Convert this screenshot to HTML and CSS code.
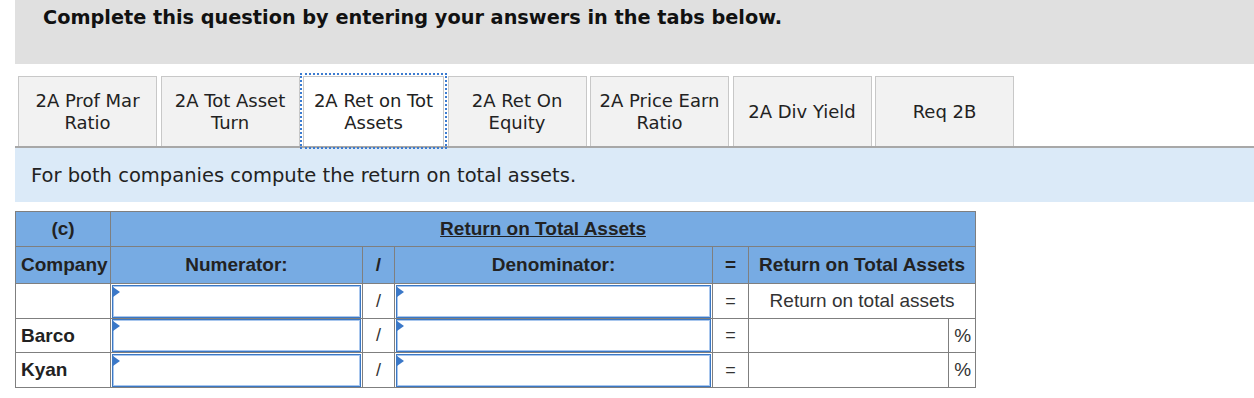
FILE: index.html
```html
<!DOCTYPE html>
<html lang="en">
<head>
  <meta charset="UTF-8" />
  <meta name="viewport" content="width=device-width, initial-scale=1.0"/>
  <title>Return on Total Assets</title>
  <link rel="stylesheet" href="styles.css">
</head>
<body>
  <div class="page">
    <div class="prompt">
      <h1>Complete this question by entering your answers in the tabs below.</h1>
    </div>

    <div class="tabs">
      <button class="tab">2A Prof Mar Ratio</button>
      <button class="tab">2A Tot Asset Turn</button>
      <button class="tab active">2A Ret on Tot Assets</button>
      <button class="tab">2A Ret On Equity</button>
      <button class="tab">2A Price Earn Ratio</button>
      <button class="tab">2A Div Yield</button>
      <button class="tab">Req 2B</button>
    </div>

    <div class="instructions">For both companies compute the return on total assets.</div>

    <table class="calc">
      <colgroup>
        <col class="c-company">
        <col class="c-num">
        <col class="c-op">
        <col class="c-den">
        <col class="c-eq">
        <col class="c-result">
        <col class="c-pct">
      </colgroup>
      <thead>
        <tr class="head-1">
          <th>(c)</th>
          <th colspan="6"><u>Return on Total Assets</u></th>
        </tr>
        <tr class="head-2">
          <th class="left">Company</th>
          <th>Numerator:</th>
          <th>/</th>
          <th>Denominator:</th>
          <th>=</th>
          <th colspan="2">Return on Total Assets</th>
        </tr>
      </thead>
      <tbody>
        <tr class="r1">
          <td></td>
          <td class="field"><div class="entry"><input type="text" /></div></td>
          <td class="op">/</td>
          <td class="field"><div class="entry"><input type="text" /></div></td>
          <td class="op">=</td>
          <td colspan="2" class="label">Return on total assets</td>
        </tr>
        <tr class="r2">
          <td class="name">Barco</td>
          <td class="field"><div class="entry"><input type="text" /></div></td>
          <td class="op">/</td>
          <td class="field"><div class="entry"><input type="text" /></div></td>
          <td class="op">=</td>
          <td></td>
          <td class="pct">%</td>
        </tr>
        <tr class="r3">
          <td class="name">Kyan</td>
          <td class="field"><div class="entry"><input type="text" /></div></td>
          <td class="op">/</td>
          <td class="field"><div class="entry"><input type="text" /></div></td>
          <td class="op">=</td>
          <td></td>
          <td class="pct">%</td>
        </tr>
      </tbody>
    </table>
  </div>
</body>
</html>
```

FILE: styles.css
```css
body {
  margin: 0;
  padding: 0;
  background: #fff;
  color: #222;
  font-family: 'DejaVu Sans', Verdana, sans-serif;
}

.page {
  margin-left: 15px;
}

.prompt {
  height: 64px;
  box-sizing: border-box;
  padding: 7px 28px 0;
  background: #e0e0e0;
}

.prompt h1 {
  margin: 0;
  font-size: 19.3px;
  line-height: 22px;
  font-weight: bold;
  color: #111;
}

.tabs {
  display: flex;
  gap: 3.5px;
  margin-top: 12px;
  padding-left: 3px;
  border-bottom: 2px solid #a8a8a8;
}

.tab {
  width: 139px;
  height: 70px;
  box-sizing: border-box;
  padding: 0 5px;
  border: 1px solid #c8c8c8;
  border-bottom: none;
  background: #f2f2f2;
  color: #222;
  font-family: 'DejaVu Sans', Verdana, sans-serif;
  font-size: 18px;
  line-height: 22px;
  text-align: center;
  cursor: pointer;
}

.tab.active {
  width: 141px;
  background: #fff;
  outline: 2px dotted #3b7bd0;
  outline-offset: 1px;
}

.instructions {
  height: 54px;
  display: flex;
  align-items: center;
  padding-left: 16px;
  background: #dbeaf8;
  font-size: 19.5px;
  color: #222;
}

.calc {
  margin-top: 9px;
  border-collapse: collapse;
  table-layout: fixed;
  width: 960px;
  font-family: 'Liberation Sans', Arial, sans-serif;
  font-size: 19px;
  color: #222;
}

.c-company { width: 95px; }
.c-num { width: 252px; }
.c-op { width: 32px; }
.c-den { width: 318px; }
.c-eq { width: 36px; }
.c-result { width: 200px; }
.c-pct { width: 27px; }

.calc th,
.calc td {
  border: 1px solid #7f7f7f;
  padding: 0;
  text-align: center;
  vertical-align: middle;
}

.calc thead th {
  background: #77abe3;
  font-weight: bold;
}

.calc th.left {
  text-align: left;
  padding-left: 5px;
}

.head-1 { height: 35px; }
.head-2 { height: 37px; }
.r1 { height: 35px; }
.r2 { height: 34px; }
.r3 { height: 35px; }

.calc td.name {
  text-align: left;
  padding-left: 5px;
  font-weight: bold;
}

.calc td.op {
  color: #333;
  font-size: 18px;
}

.calc td.label {
  color: #333;
}

.calc td.pct {
  text-align: right;
  padding-right: 4px;
  color: #333;
}

.calc td.field {
  padding: 0 1px;
}

.entry {
  position: relative;
}

.entry::before {
  content: "";
  position: absolute;
  left: 1px;
  top: 2px;
  border-left: 7px solid #3b78c8;
  border-top: 5px solid transparent;
  border-bottom: 5px solid transparent;
}

.entry input {
  display: block;
  width: 100%;
  height: 33px;
  box-sizing: border-box;
  margin: 0;
  border: 1px solid #3b78c4;
  box-shadow: inset 0 0 0 1px #a9c7ee;
  background: #fff;
  font-family: 'Liberation Sans', Arial, sans-serif;
  font-size: 18px;
}
```
